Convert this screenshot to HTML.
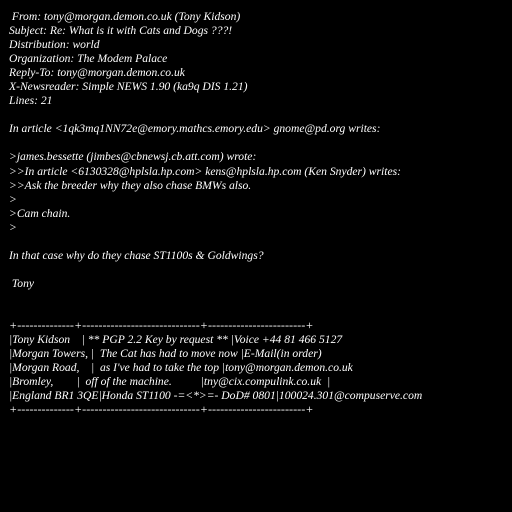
<!DOCTYPE html>
<html><head><style>
html,body{margin:0;padding:0;background:#000;width:512px;height:512px;overflow:hidden}
pre{position:absolute;left:9px;top:10px;margin:0;color:#fff;font-family:"Liberation Serif",serif;font-style:italic;font-size:11.6px;line-height:14.05px}
.b{display:inline-block;transform:scaleX(1.05);transform-origin:0 0}
</style></head><body>
<pre> From: tony@morgan.demon.co.uk (Tony Kidson)
Subject: Re: What is it with Cats and Dogs ???!
Distribution: world
Organization: The Modem Palace
Reply-To: tony@morgan.demon.co.uk
X-Newsreader: Simple NEWS 1.90 (ka9q DIS 1.21)
Lines: 21

In article &lt;1qk3mq1NN72e@emory.mathcs.emory.edu&gt; gnome@pd.org writes:

&gt;james.bessette (jimbes@cbnewsj.cb.att.com) wrote:
&gt;&gt;In article &lt;6130328@hplsla.hp.com&gt; kens@hplsla.hp.com (Ken Snyder) writes:
&gt;&gt;Ask the breeder why they also chase BMWs also.
&gt;
&gt;Cam chain.
&gt;

In that case why do they chase ST1100s &amp; Goldwings?

 Tony


<span class="b">+--------------+-----------------------------+------------------------+</span>
|Tony Kidson    | ** PGP 2.2 Key by request ** |Voice +44 81 466 5127
|Morgan Towers, |  The Cat has had to move now |E-Mail(in order)
|Morgan Road,    |  as I've had to take the top |tony@morgan.demon.co.uk
|Bromley,        |  off of the machine.          |tny@cix.compulink.co.uk  |
|England BR1 3QE|Honda ST1100 -=&lt;*&gt;=- DoD# 0801|100024.301@compuserve.com
<span class="b">+--------------+-----------------------------+------------------------+</span></pre>
</body></html>
